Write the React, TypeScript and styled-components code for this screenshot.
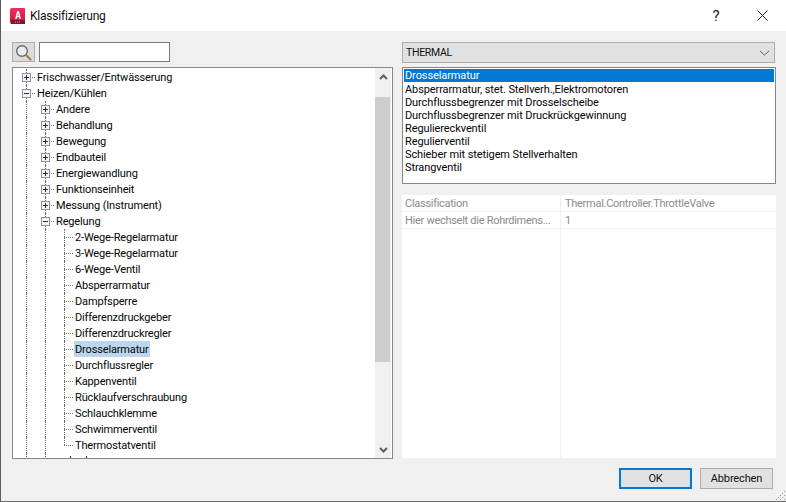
import React from "react";
import styled, { createGlobalStyle } from "styled-components";

const Global = createGlobalStyle`
  html, body { margin: 0; padding: 0; width: 786px; height: 502px; overflow: hidden; background: #f0f0f0; }
  * { box-sizing: border-box; }
`;

const Window = styled.div`
  width: 786px; height: 502px; position: relative; display: flex; flex-direction: column;
  background: #f0f0f0; border-left: 1px solid #5c5c5c; border-bottom: 1px solid #6d6d6d;
  font-family: "Roboto", "Liberation Sans", sans-serif; font-size: 11px; letter-spacing: -0.15px; color: #000; overflow: hidden;
`;
const TitleBar = styled.div`
  height: 31px; flex: none; background: #fff; display: flex; align-items: center; padding: 0 1px 0 9px;
`;
const Title = styled.span`
  font-size: 12px; letter-spacing: -0.2px; margin-left: 5px; flex: 1; color: #111;
`;
const TitleButton = styled.div`
  width: 46px; height: 31px; display: flex; align-items: center; justify-content: center; font-size: 15px; color: #222;
`;
const Body = styled.div`
  flex: 1; display: flex; padding: 11px 10px 0 11px; gap: 9px; min-height: 0;
`;
const LeftColumn = styled.div`
  width: 381px; flex: none; display: flex; flex-direction: column; gap: 5px;
`;
const RightColumn = styled.div`
  flex: 1; display: flex; flex-direction: column;
`;
const SearchRow = styled.div`
  display: flex; gap: 4px; height: 20px;
`;
const SearchButton = styled.div`
  width: 23px; height: 20px; background: #dcdcdc; border: 1px solid #adadad; display: flex; align-items: center; justify-content: center;
`;
const SearchInput = styled.div`
  width: 131px; height: 20px; background: #fff; border: 1px solid #7a7a7a;
`;
const TreeBox = styled.div`
  height: 392px; flex: none; display: flex; background: #fff; border: 1px solid #828790; overflow: hidden;
`;
const TreeList = styled.div`
  flex: 1; overflow: hidden; padding-top: 1px;
`;
const Row = styled.div`
  height: 16px; display: flex; align-items: stretch; padding-left: 4px;
`;
const Guide = styled.div`
  width: 19px; flex: none; position: relative;
  &::before { content: ""; position: absolute; left: 9px; top: 0; bottom: 0; border-left: 1px dotted #6a6a6a; }
`;
const Branch = styled.div<{ $end?: boolean }>`
  width: 19px; flex: none; position: relative;
  &::before { content: ""; position: absolute; left: 9px; top: 0; bottom: ${(p) => (p.$end ? "8px" : "0")}; border-left: 1px dotted #6a6a6a; }
  &::after { content: ""; position: absolute; left: 9px; top: 8px; width: 9px; border-top: 1px dotted #6a6a6a; }
`;
const Expander = styled.svg`
  position: absolute; left: 5px; top: 4px; z-index: 1;
`;
const Label = styled.span<{ $selected?: boolean }>`
  height: 16px; line-height: 18px; padding: 0 1px; white-space: nowrap; color: #050505; overflow: hidden;
  background: ${(p) => (p.$selected ? "#bbd7ef" : "transparent")};
`;
const ScrollBar = styled.div`
  width: 16px; flex: none; background: #f0f0f0; display: flex; flex-direction: column; margin: 0 1px 0 0;
`;
const ScrollArrow = styled.div`
  height: 17px; flex: none; display: flex; align-items: center; justify-content: center;
`;
const ScrollTrack = styled.div`
  flex: 1; display: flex; flex-direction: column; padding: 12px 1px 0 0;
`;
const ScrollThumb = styled.div`
  height: 265px; flex: none; background: #cdcdcd;
`;
const Combo = styled.div`
  height: 21px; flex: none; margin-right: 1px; background: #e1e1e1; border: 1px solid #adadad; display: flex; align-items: center; justify-content: space-between; padding: 0 4px 0 3px; font-size: 10.5px; letter-spacing: -0.3px; color: #111;
`;
const ListBox = styled.div`
  height: 117px; flex: none; margin-top: 4px; background: #fff; border: 1px solid #828790; padding: 1px;
`;
const ListItem = styled.div<{ $selected?: boolean }>`
  height: 13px; line-height: 13px; padding-left: 1px; white-space: nowrap; letter-spacing: -0.1px;
  margin-bottom: ${(p) => (p.$selected ? "1px" : "0")};
  background: ${(p) => (p.$selected ? "#0078d7" : "transparent")};
  color: ${(p) => (p.$selected ? "#fff" : "#050505")};
`;
const PropertyGrid = styled.div`
  height: 263px; flex: none; margin-top: 11px; background: #fff; display: grid; grid-template-columns: 159px 1fr; grid-auto-rows: 17px; position: relative;
  &::after { content: ""; position: absolute; left: 158px; top: 0; bottom: 0; border-left: 1px solid #f0f0f0; }
`;
const PropertyCell = styled.div<{ $value?: boolean }>`
  height: 17px; line-height: 17px; padding-left: ${(p) => (p.$value ? "4px" : "3px")}; letter-spacing: -0.28px; color: #8b8b8b; border-bottom: 1px solid #f0f0f0; white-space: nowrap; overflow: hidden;
`;
const Footer = styled.div`
  height: 42px; flex: none; display: flex; justify-content: flex-end; align-items: flex-start; gap: 8px; padding: 9px 13px 0 0; position: relative;
`;
const Button = styled.div<{ $primary?: boolean }>`
  width: 73px; height: 21px; background: #e1e1e1;
  border: ${(p) => (p.$primary ? "2px solid #0078d7" : "1px solid #adadad")};
  display: flex; align-items: center; justify-content: center; color: #111;
`;
const Grip = styled.svg`
  position: absolute; right: 0; bottom: 0;
`;
const ClippedText = styled.svg`
  flex: none;
`;

type Node = { text: string; level: number; kind: "plus" | "minus" | "leaf"; selected?: boolean; last?: boolean };
const nodes: Node[] = [
  { text: "Frischwasser/Entwässerung", level: 0, kind: "plus" },
  { text: "Heizen/Kühlen", level: 0, kind: "minus" },
  { text: "Andere", level: 1, kind: "plus" },
  { text: "Behandlung", level: 1, kind: "plus" },
  { text: "Bewegung", level: 1, kind: "plus" },
  { text: "Endbauteil", level: 1, kind: "plus" },
  { text: "Energiewandlung", level: 1, kind: "plus" },
  { text: "Funktionseinheit", level: 1, kind: "plus" },
  { text: "Messung (Instrument)", level: 1, kind: "plus" },
  { text: "Regelung", level: 1, kind: "minus" },
  { text: "2-Wege-Regelarmatur", level: 2, kind: "leaf" },
  { text: "3-Wege-Regelarmatur", level: 2, kind: "leaf" },
  { text: "6-Wege-Ventil", level: 2, kind: "leaf" },
  { text: "Absperrarmatur", level: 2, kind: "leaf" },
  { text: "Dampfsperre", level: 2, kind: "leaf" },
  { text: "Differenzdruckgeber", level: 2, kind: "leaf" },
  { text: "Differenzdruckregler", level: 2, kind: "leaf" },
  { text: "Drosselarmatur", level: 2, kind: "leaf", selected: true },
  { text: "Durchflussregler", level: 2, kind: "leaf" },
  { text: "Kappenventil", level: 2, kind: "leaf" },
  { text: "Rücklaufverschraubung", level: 2, kind: "leaf" },
  { text: "Schlauchklemme", level: 2, kind: "leaf" },
  { text: "Schwimmerventil", level: 2, kind: "leaf" },
  { text: "Thermostatventil", level: 2, kind: "leaf", last: true },
];

const listItems = [
  "Drosselarmatur",
  "Absperrarmatur, stet. Stellverh.,Elektromotoren",
  "Durchflussbegrenzer mit Drosselscheibe",
  "Durchflussbegrenzer mit Druckrückgewinnung",
  "Reguliereckventil",
  "Regulierventil",
  "Schieber mit stetigem Stellverhalten",
  "Strangventil",
];

const ExpanderIcon = ({ open }: { open: boolean }) => (
  <Expander width="9" height="9" viewBox="0 0 9 9">
    <rect x="0.5" y="0.5" width="8" height="8" fill="#f4f4f8" stroke="#8c94a4" />
    <path d={open ? "M2 4.5H7" : "M2 4.5H7M4.5 2V7"} stroke="#26304a" fill="none" />
  </Expander>
);

const TreeRow = ({ node }: { node: Node }) => (
  <Row>
    {node.level >= 1 && <Guide />}
    {node.level >= 2 && <Guide />}
    <Branch $end={node.last}>
      {node.kind !== "leaf" && <ExpanderIcon open={node.kind === "minus"} />}
    </Branch>
    <Label $selected={node.selected}>{node.text}</Label>
  </Row>
);

export default function App() {
  return (
    <>
      <Global />
      <Window>
        <TitleBar>
          <svg width="15" height="16" viewBox="0 0 15 16">
            <defs>
              <linearGradient id="logo" x1="0" y1="0" x2="0" y2="1">
                <stop offset="0" stopColor="#ee2f62" />
                <stop offset="1" stopColor="#d5103f" />
              </linearGradient>
            </defs>
            <path d="M2 0H14a1 1 0 0 1 1 1V15a1 1 0 0 1-1 1H2a2 2 0 0 1-2-2V2a2 2 0 0 1 2-2Z" fill="url(#logo)" />
            <rect x="1" y="12" width="14" height="4" fill="#7d1830" />
            <path d="M5 11 7.2 3H8.9L11 11H9.4L9 9.3H7.1L6.7 11ZM7.4 8H8.7L8 5.2Z" fill="#fff" />
            <path d="M5 14H11" stroke="#d9a3b0" strokeDasharray="1 1" />
          </svg>
          <Title>Klassifizierung</Title>
          <TitleButton>?</TitleButton>
          <TitleButton>
            <svg width="11" height="11" viewBox="0 0 11 11">
              <path d="M0.5 0.5 10.5 10.5M10.5 0.5 0.5 10.5" stroke="#222" strokeWidth="1" fill="none" />
            </svg>
          </TitleButton>
        </TitleBar>
        <Body>
          <LeftColumn>
            <SearchRow>
              <SearchButton>
                <svg width="17" height="17" viewBox="0 0 17 17">
                  <circle cx="7" cy="7" r="5.3" fill="#e8eef0" stroke="#6a6a6a" strokeWidth="1.4" />
                  <path d="M11 11 15.5 15.5" stroke="#a67c48" strokeWidth="2" strokeLinecap="round" />
                </svg>
              </SearchButton>
              <SearchInput />
            </SearchRow>
            <TreeBox>
              <TreeList>
                {nodes.map((n) => (
                  <TreeRow key={n.text} node={n} />
                ))}
                <Row>
                  <Guide />
                  <Guide />
                  <ClippedText width="34" height="16" viewBox="0 0 34 16">
                    <path d="M15.5 3V5M31.5 3V5" stroke="#2a2f6a" fill="none" />
                  </ClippedText>
                </Row>
              </TreeList>
              <ScrollBar>
                <ScrollArrow>
                  <svg width="9" height="6" viewBox="0 0 9 6">
                    <path d="M1 5 4.5 1.5 8 5" stroke="#606060" strokeWidth="2" fill="none" />
                  </svg>
                </ScrollArrow>
                <ScrollTrack>
                  <ScrollThumb />
                </ScrollTrack>
                <ScrollArrow>
                  <svg width="9" height="6" viewBox="0 0 9 6">
                    <path d="M1 1 4.5 4.5 8 1" stroke="#606060" strokeWidth="2" fill="none" />
                  </svg>
                </ScrollArrow>
              </ScrollBar>
            </TreeBox>
          </LeftColumn>
          <RightColumn>
            <Combo>
              THERMAL
              <svg width="11" height="6" viewBox="0 0 11 6">
                <path d="M1 1 5.5 5 10 1" stroke="#606060" fill="none" />
              </svg>
            </Combo>
            <ListBox>
              {listItems.map((t, i) => (
                <ListItem key={t} $selected={i === 0}>
                  {t}
                </ListItem>
              ))}
            </ListBox>
            <PropertyGrid>
              <PropertyCell>Classification</PropertyCell>
              <PropertyCell $value>Thermal.Controller.ThrottleValve</PropertyCell>
              <PropertyCell>Hier wechselt die Rohrdimens...</PropertyCell>
              <PropertyCell $value>1</PropertyCell>
            </PropertyGrid>
          </RightColumn>
        </Body>
        <Footer>
          <Button $primary>OK</Button>
          <Button>Abbrechen</Button>
          <Grip width="12" height="12" viewBox="0 0 12 12">
            <path d="M11 2 2 11M11 6 6 11M11 10 10 11" stroke="#9a9a9a" strokeDasharray="1.4 1.4" fill="none" />
          </Grip>
        </Footer>
      </Window>
    </>
  );
}
